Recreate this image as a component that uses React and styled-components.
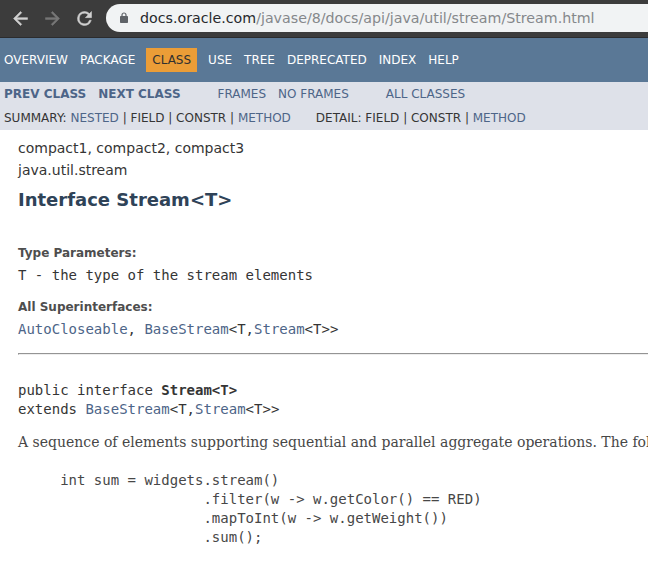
import React from "react";
import styled, { createGlobalStyle } from "styled-components";

const GlobalStyle = createGlobalStyle`
  body {
    margin: 0;
    background: #fff;
    color: #353535;
    font-family: "DejaVu Sans", Arial, sans-serif;
    font-size: 14px;
    overflow: hidden;
  }
`;

const Page = styled.div`
  width: 100%;
  height: 578px;
  overflow: hidden;
`;

const BrowserBar = styled.header`
  box-sizing: border-box;
  display: flex;
  align-items: center;
  height: 38px;
  padding: 0 0 1px 9px;
  background: #3c3c3c;
  border-bottom: 1px solid #2b2c2e;
`;

const ToolButton = styled.span`
  display: flex;
  justify-content: center;
  width: 22px;
  margin-right: 10px;
  color: ${(p) => (p.$disabled ? "#777" : "#d0d0d0")};
`;

const AddressField = styled.div`
  display: flex;
  align-items: center;
  flex: 1;
  height: 28px;
  margin-left: 1px;
  padding-left: 14px;
  border-radius: 14px 0 0 14px;
  background: #f1f3f4;
  color: #85888b;
  font-size: 14.22px;
  white-space: nowrap;
`;

const LockIcon = styled.svg`
  display: block;
  flex: none;
  margin-right: 12px;
`;

const Host = styled.span`
  color: #27292c;
`;

const NavBar = styled.nav`
  display: flex;
  align-items: center;
  gap: 12px;
  height: 44px;
  padding-left: 4px;
  background: #5a7896;
  color: #fff;
  font-size: 12px;
  white-space: nowrap;
`;

const NavItem = styled.span`
  line-height: 24px;
  ${(p) =>
    p.$active &&
    `
    margin: 0 -1px;
    padding: 0 6px;
    background: #eb9d37;
    color: #303030;
  `}
`;

const SubNav = styled.div`
  height: 48px;
  background: #dee1e9;
  font-size: 12px;
  line-height: 24px;
  white-space: nowrap;
`;

const SubRow = styled.div`
  display: flex;
  height: 24px;
  padding-left: 4px;
`;

const SubGroup = styled.div`
  display: flex;
  gap: 12px;
  margin-right: ${(p) => p.$after || 0}px;
  color: #4d6588;
  font-weight: ${(p) => (p.$bold ? "bold" : "normal")};
`;

const SubList = styled.div`
  margin-right: 25px;
`;

const Link = styled.a`
  color: #4d6588;
`;

const Content = styled.main`
  padding: 7px 0 0 18px;
  white-space: nowrap;
`;

const SubTitle = styled.div`
  height: 22px;
  line-height: 22px;
`;

const Title = styled.h2`
  margin: 8px 0 0;
  color: #2f4358;
  font-size: 18px;
  line-height: 22px;
`;

const Label = styled.div`
  margin-top: ${(p) => p.$top}px;
  color: #4e4e4e;
  font-size: 12px;
  font-weight: bold;
  line-height: 16px;
`;

const Code = styled.div`
  margin-top: ${(p) => p.$top}px;
  font-family: "DejaVu Sans Mono", monospace;
  font-size: 14px;
  line-height: 19px;
  white-space: pre;
`;

const Sample = styled(Code)`
  color: #474747;
`;

const Rule = styled.hr`
  margin: 14px 0 0;
  border-style: solid;
  border-width: 1px 0 1px 1px;
  border-color: #949494 #949494 #eee;
`;

const Description = styled.p`
  margin: 14px 0 0;
  color: #474747;
  font-family: "DejaVu Serif", Georgia, serif;
  font-size: 14px;
  line-height: 19px;
`;

const Icon = ({ d }) => (
  <svg
    width="21"
    height="21"
    viewBox="0 0 24 24"
    fill="currentColor"
    stroke="currentColor"
    strokeWidth="0.6"
  >
    <path d={d} />
  </svg>
);

const BACK = "M20 11H7.83l5.59-5.59L12 4l-8 8 8 8 1.41-1.41L7.83 13H20v-2z";
const FORWARD = "M12 4l-1.41 1.41L16.17 11H4v2h12.17l-5.58 5.59L12 20l8-8z";
const RELOAD =
  "M17.65 6.35A7.96 7.96 0 0 0 12 4a8 8 0 1 0 7.73 10h-2.08A6 6 0 1 1 12 6c1.66 0 3.14.69 4.22 1.78L13 11h7V4z";

const Supertype = () => (
  <>
    <Link>BaseStream</Link>{"<T,"}<Link>Stream</Link>{"<T>>"}
  </>
);

const NAV = ["OVERVIEW", "PACKAGE", "CLASS", "USE", "TREE", "DEPRECATED", "INDEX", "HELP"];

const SAMPLE = `     int sum = widgets.stream()
                      .filter(w -> w.getColor() == RED)
                      .mapToInt(w -> w.getWeight())
                      .sum();`;

export default function App() {
  return (
    <Page>
      <GlobalStyle />
      <BrowserBar>
        <ToolButton><Icon d={BACK} /></ToolButton>
        <ToolButton $disabled><Icon d={FORWARD} /></ToolButton>
        <ToolButton><Icon d={RELOAD} /></ToolButton>
        <AddressField>
          <LockIcon width="8" height="12" viewBox="0 0 8 12">
            <path d="M2 5V3a2 2 0 0 1 4 0v2" fill="none" stroke="#5f6368" strokeWidth="1.2" />
            <rect x="0" y="4" width="8" height="7" rx="0.8" fill="#5f6368" />
          </LockIcon>
          <Host>docs.oracle.com</Host>/javase/8/docs/api/java/util/stream/Stream.html
        </AddressField>
      </BrowserBar>
      <NavBar>
        {NAV.map((name) => (
          <NavItem key={name} $active={name === "CLASS"}>{name}</NavItem>
        ))}
      </NavBar>
      <SubNav>
        <SubRow>
          <SubGroup $bold $after={37}><span>PREV CLASS</span><span>NEXT CLASS</span></SubGroup>
          <SubGroup $after={37}><span>FRAMES</span><span>NO FRAMES</span></SubGroup>
          <SubGroup><span>ALL CLASSES</span></SubGroup>
        </SubRow>
        <SubRow>
          <SubList>SUMMARY: <Link>NESTED</Link> | FIELD | CONSTR | <Link>METHOD</Link></SubList>
          <SubList>DETAIL: FIELD | CONSTR | <Link>METHOD</Link></SubList>
        </SubRow>
      </SubNav>
      <Content>
        <SubTitle>compact1, compact2, compact3</SubTitle>
        <SubTitle>java.util.stream</SubTitle>
        <Title>{"Interface Stream<T>"}</Title>
        <Label $top={34}>Type Parameters:</Label>
        <Code $top={5}>T - the type of the stream elements</Code>
        <Label $top={14}>All Superinterfaces:</Label>
        <Code $top={5}><Link>AutoCloseable</Link>, <Supertype /></Code>
        <Rule />
        <Code $top={26}>
          {"public interface "}<b>{"Stream<T>"}</b>{"\nextends "}<Supertype />
        </Code>
        <Description>
          A sequence of elements supporting sequential and parallel aggregate operations. The following
        </Description>
        <Sample $top={19}>{SAMPLE}</Sample>
      </Content>
    </Page>
  );
}
